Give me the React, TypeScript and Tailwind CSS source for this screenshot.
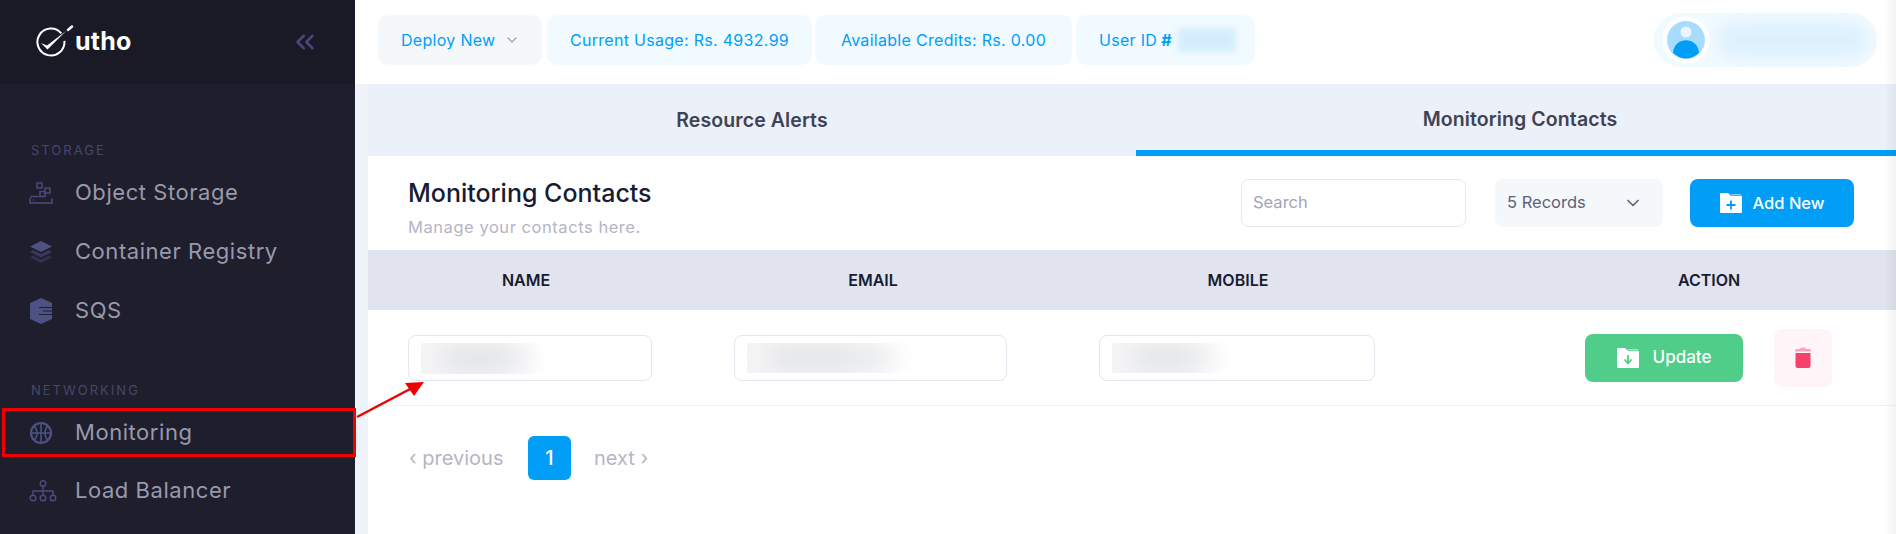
import { ChevronDown, ChevronsLeft } from "lucide-react";

const font = "font-['Inter','Liberation_Sans',sans-serif]";

function ObjectIcon() {
  return (
    <svg width="24" height="24" viewBox="0 0 24 24" fill="none" stroke="#4a4d7c" strokeWidth="1.4">
      <rect x="8" y="2" width="5" height="5" />
      <rect x="16" y="7" width="5" height="5" />
      <rect x="11" y="10.5" width="5" height="5" />
      <path d="M10 15.5H2.5L1 18v4h22v-4.5" />
      <path d="M4 19h1" />
    </svg>
  );
}
function LayersIcon() {
  return (
    <svg width="24" height="24" viewBox="0 0 24 24">
      <path d="M12 1 L23 6.5 L12 12 L1 6.5Z" fill="#4e5183" />
      <path d="M4 10 L12 14 L20 10 L23 12 L12 17.5 L1 12Z" fill="#383a5e" />
      <path d="M4 15.5 L12 19.5 L20 15.5 L23 17.5 L12 23 L1 17.5Z" fill="#2f3150" />
    </svg>
  );
}
function SqsIcon() {
  return (
    <svg width="24" height="28" viewBox="0 0 24 28">
      <path d="M12 1 L23 6 V22 L12 27 L1 22 V6Z" fill="#4e5183" />
      <path d="M10 10.5 H23 M14 14 H23 M10 17.5 H23" stroke="#1e1e2d" strokeWidth="1" />
    </svg>
  );
}
function GlobeIcon() {
  return (
    <svg width="24" height="24" viewBox="0 0 24 24" fill="none" stroke="#4e5183" strokeWidth="2.2">
      <circle cx="12" cy="12" r="10" />
      <path d="M2 12h20M12 2v20M5 5c4 3 4 11 0 14M19 5c-4 3-4 11 0 14" strokeWidth="1.6" />
    </svg>
  );
}
function NetworkIcon() {
  return (
    <svg width="28" height="22" viewBox="0 0 28 22" fill="none" stroke="#4a4d7c" strokeWidth="1.4">
      <circle cx="14" cy="3.5" r="2.8" />
      <path d="M14 6.5V11M4 15v-4h20v4M14 11v4" />
      <circle cx="4" cy="18" r="2.8" />
      <circle cx="14" cy="18" r="2.8" />
      <circle cx="24" cy="18" r="2.8" />
    </svg>
  );
}
function Logo() {
  return (
    <svg width="40" height="34" viewBox="0 0 40 34" fill="none">
      <path d="M26.3 8.3 A13.5 13.5 0 1 0 29.4 15.8" stroke="#fff" strokeWidth="2" />
      <path d="M6 18 L12 20.5 L31 6 L12.5 24.5 Z" fill="#fff" />
      <path d="M33 5 L37 1.5" stroke="#fff" strokeWidth="2.4" strokeLinecap="round" />
    </svg>
  );
}
function FolderIcon({ plus, color }: { plus?: boolean; color: string }) {
  return (
    <svg width="22" height="20" viewBox="0 0 22 20">
      <path d="M0 1 Q0 0 1 0 H8 L11 3 H22 V19 Q22 20 21 20 H1 Q0 20 0 19Z" fill="#fff" />
      <path d="M10 1 H21 V2.5 H11.5Z" fill="#fff" opacity="0.5" />
      {plus ? (
        <path d="M11 7.5 V16.5 M6.5 12 H15.5" stroke={color} strokeWidth="1.8" />
      ) : (
        <path d="M11 7 V14 M7.5 11.5 L11 15.5 L14.5 11.5" stroke={color} strokeWidth="1.8" fill="none" />
      )}
    </svg>
  );
}
function Trash() {
  return (
    <svg width="18" height="22" viewBox="0 0 18 22">
      <path d="M1 3.5 Q1 2 3 2 H6 Q6 0.5 8 0.5 H10 Q12 0.5 12 2 H15 Q17 2 17 3.5 V4.5 H1Z" fill="#f9a3b8" />
      <path d="M1.5 6 H16.5 V19 Q16.5 21 14.5 21 H3.5 Q1.5 21 1.5 19Z" fill="#f6416c" />
    </svg>
  );
}
function Avatar() {
  return (
    <svg width="48" height="48" viewBox="0 0 48 48">
      <circle cx="24" cy="24" r="23.5" fill="#fff" />
      <circle cx="24" cy="24" r="19" fill="#a8dcff" />
      <ellipse cx="24" cy="16" rx="5.5" ry="5.5" fill="#eaf6ff" />
      <path d="M11 37 C12 20 36 20 37 37 Q24 48 11 37Z" fill="#009ef7" />
    </svg>
  );
}

function Chip({ children, className }: { children: React.ReactNode; className: string }) {
  return (
    <div className={`h-[50px] rounded-[10px] flex items-center text-[16px] tracking-[0.3px] text-[#009ef7] ${className}`}>
      {children}
    </div>
  );
}

function NavLabel({ children, className }: { children: React.ReactNode; className: string }) {
  return <div className={`pl-[31px] text-[13px] leading-[16px] tracking-[2px] text-[#45476b] ${className}`}>{children}</div>;
}

function NavItem({ icon, label, className = "" }: { icon: React.ReactNode; label: string; className?: string }) {
  return (
    <div className={`h-[48px] flex items-center text-[22px] tracking-[0.55px] text-[#9899ac] ${className}`}>
      <div className="w-[75px] pl-[29px] flex items-center">{icon}</div>
      <span className="-mt-[2px]">{label}</span>
    </div>
  );
}

function Blur({ w, h = 30 }: { w: number; h?: number }) {
  return (
    <div
      className="overflow-hidden bg-gradient-to-r from-[#f5f5f6] via-[#f3f3f4] to-white flex items-center justify-center"
      style={{ width: w, height: h }}
    >
      <div className="bg-gray-400 opacity-30 blur-md rounded-full" style={{ width: w - 40, height: h - 16 }} />
    </div>
  );
}

export default function App() {
  return (
    <div className={`relative w-[1896px] h-[534px] overflow-hidden flex bg-[#eef2f9] ${font}`}>
      <aside className="w-[355px] shrink-0 bg-[#1e1e2d]">
        <div className="h-[84px] bg-[#1a1a27] flex items-center justify-between pl-[35px] pr-[35px]">
          <div className="flex items-center">
            <Logo />
            <span className="text-white font-bold text-[25px] tracking-[0.2px]">utho</span>
          </div>
          <ChevronsLeft size={30} className="text-[#454879]" strokeWidth={2} />
        </div>
        <NavLabel className="mt-[58px]">STORAGE</NavLabel>
        <NavItem className="mt-[11px]" icon={<ObjectIcon />} label="Object Storage" />
        <NavItem className="mt-[11px]" icon={<LayersIcon />} label="Container Registry" />
        <NavItem className="mt-[11px]" icon={<SqsIcon />} label="SQS" />
        <NavLabel className="mt-[47px]">NETWORKING</NavLabel>
        <NavItem className="mt-[11px]" icon={<GlobeIcon />} label="Monitoring" />
        <NavItem className="mt-[10px]" icon={<NetworkIcon />} label="Load Balancer" />
      </aside>

      <main className="flex-1 min-w-0">
        <header className="h-[84px] bg-white flex items-start pt-[15px] pl-[23px] pr-[19px]">
          <Chip className="w-[164px] bg-[#f5f8fa] pl-[23px] gap-2">
            Deploy New <ChevronDown size={16} className="text-[#a1a5b7]" />
          </Chip>
          <Chip className="ml-[5px] w-[265px] bg-[#f1faff] justify-center">Current Usage: Rs. 4932.99</Chip>
          <Chip className="ml-[3px] w-[257px] bg-[#f1faff] justify-center">Available Credits: Rs. 0.00</Chip>
          <Chip className="ml-[4px] w-[179px] bg-[#f1faff] pl-[23px]">
            User ID <span className="ml-1 font-bold">#</span>
            <div className="ml-[6px] w-[58px] h-[24px] bg-[#d4edfd] blur-[3px]" />
          </Chip>
          <div className="ml-auto -mt-[2px] w-[223px] h-[54px] rounded-[27px] bg-[#f1faff] flex items-center pl-[8px]">
            <Avatar />
            <div className="ml-[8px] w-[150px] h-[34px] bg-[#dcf0fd] blur-[8px] rounded-full" />
          </div>
        </header>

        <div className="ml-[13px]">
          <nav className="flex w-[1536px] h-[72px]">
            <div className="w-[768px] h-[72px] flex items-center justify-center pt-[2px] bg-[#ebf0f9] text-[#3f4254] font-semibold text-[19.5px] tracking-[0.1px]">
              Resource Alerts
            </div>
            <div className="w-[768px] h-[72px] flex items-center justify-center pt-[6px] bg-[#ebf0f9] border-b-[6px] border-[#009ef7] text-[#3f4254] font-semibold text-[19.5px] tracking-[0.1px]">
              Monitoring Contacts
            </div>
          </nav>

          <section className="bg-white h-[378px]">
            <div className="h-[94px] flex items-center pl-[40px] pr-[42px]">
              <div>
                <h1 className="text-[25px] leading-[28px] font-medium text-[#181c32] mt-[8px]">Monitoring Contacts</h1>
                <p className="mt-[11px] text-[16.5px] tracking-[0.55px] leading-[18px] text-[#b5b5c3]">Manage your contacts here.</p>
              </div>
              <div className="ml-auto flex items-center">
                <div className="w-[225px] h-[48px] rounded-[8px] border border-[#e8e6ef] flex items-center pl-[11px] pb-[1px] text-[16.5px] text-[#a1a5b7]">Search</div>
                <div className="ml-[29px] w-[168px] h-[48px] rounded-[8px] bg-[#f5f8fa] flex items-center justify-between pl-[12px] pr-[20px] pb-[1px] text-[16.5px] text-[#5e6278]">
                  5 Records <ChevronDown size={20} className="text-[#5e6278]" />
                </div>
                <div className="ml-[27px] w-[164px] h-[48px] rounded-[8px] bg-[#009ef7] flex items-center justify-center gap-[11px] text-white text-[16.5px] font-medium">
                  <FolderIcon plus color="#009ef7" /> Add New
                </div>
              </div>
            </div>

            <div className="h-[60px] grid grid-cols-[316px_378px_352px_1fr] items-center bg-[#e1e4ee] text-[16px] font-semibold text-[#181c32]">
              <div className="text-center">NAME</div>
              <div className="text-center">EMAIL</div>
              <div className="text-center">MOBILE</div>
              <div className="pl-[264px]">ACTION</div>
            </div>

            <div className="h-[96px] pt-[1px] grid grid-cols-[316px_378px_352px_1fr] items-center border-b border-[#eff2f5]">
              <div className="pl-[40px]">
                <div className="w-[244px] h-[46px] rounded-[8px] border border-[#e4e6ef] flex items-center pl-[12px]">
                  <Blur w={126} h={31} />
                </div>
              </div>
              <div className="pl-[50px]">
                <div className="w-[273px] h-[46px] rounded-[8px] border border-[#e4e6ef] flex items-center pl-[12px]">
                  <Blur w={165} h={30} />
                </div>
              </div>
              <div className="pl-[37px]">
                <div className="w-[276px] h-[46px] rounded-[8px] border border-[#e4e6ef] flex items-center pl-[12px]">
                  <Blur w={118} h={30} />
                </div>
              </div>
              <div className="pl-[171px] flex items-center">
                <div className="w-[158px] h-[48px] rounded-[8px] bg-[#50cd89] flex items-center justify-center gap-[14px] text-white text-[17px] font-medium">
                  <FolderIcon color="#50cd89" /> Update
                </div>
                <div className="ml-[31px] w-[58px] h-[58px] rounded-[8px] bg-[#fff5f8] flex items-center justify-center">
                  <Trash />
                </div>
              </div>
            </div>

            <div className="flex items-center pl-[41px] mt-[30px] text-[20px] text-[#b5b5c3]">
              <span className="w-[119px]">‹ previous</span>
              <div className="w-[43px] h-[44px] rounded-[6px] bg-[#009ef7] flex items-center justify-center text-white font-medium">1</div>
              <span className="ml-[23px]">next ›</span>
            </div>
          </section>
        </div>
      </main>

      <div className="absolute left-[2px] top-[408px] w-[354px] h-[49px] border-[3px] border-[#f00000]" />
      <svg className="absolute left-[356px] top-[378px]" width="72" height="44" viewBox="0 0 72 44">
        <path d="M1 39 L56 10" stroke="#f00000" strokeWidth="2.5" />
        <path d="M68 4 L49 5 L58 18Z" fill="#f00000" />
      </svg>
      <div className="absolute right-0 top-0 bottom-0 w-[12px] bg-gradient-to-r from-transparent to-black/5" />
    </div>
  );
}
